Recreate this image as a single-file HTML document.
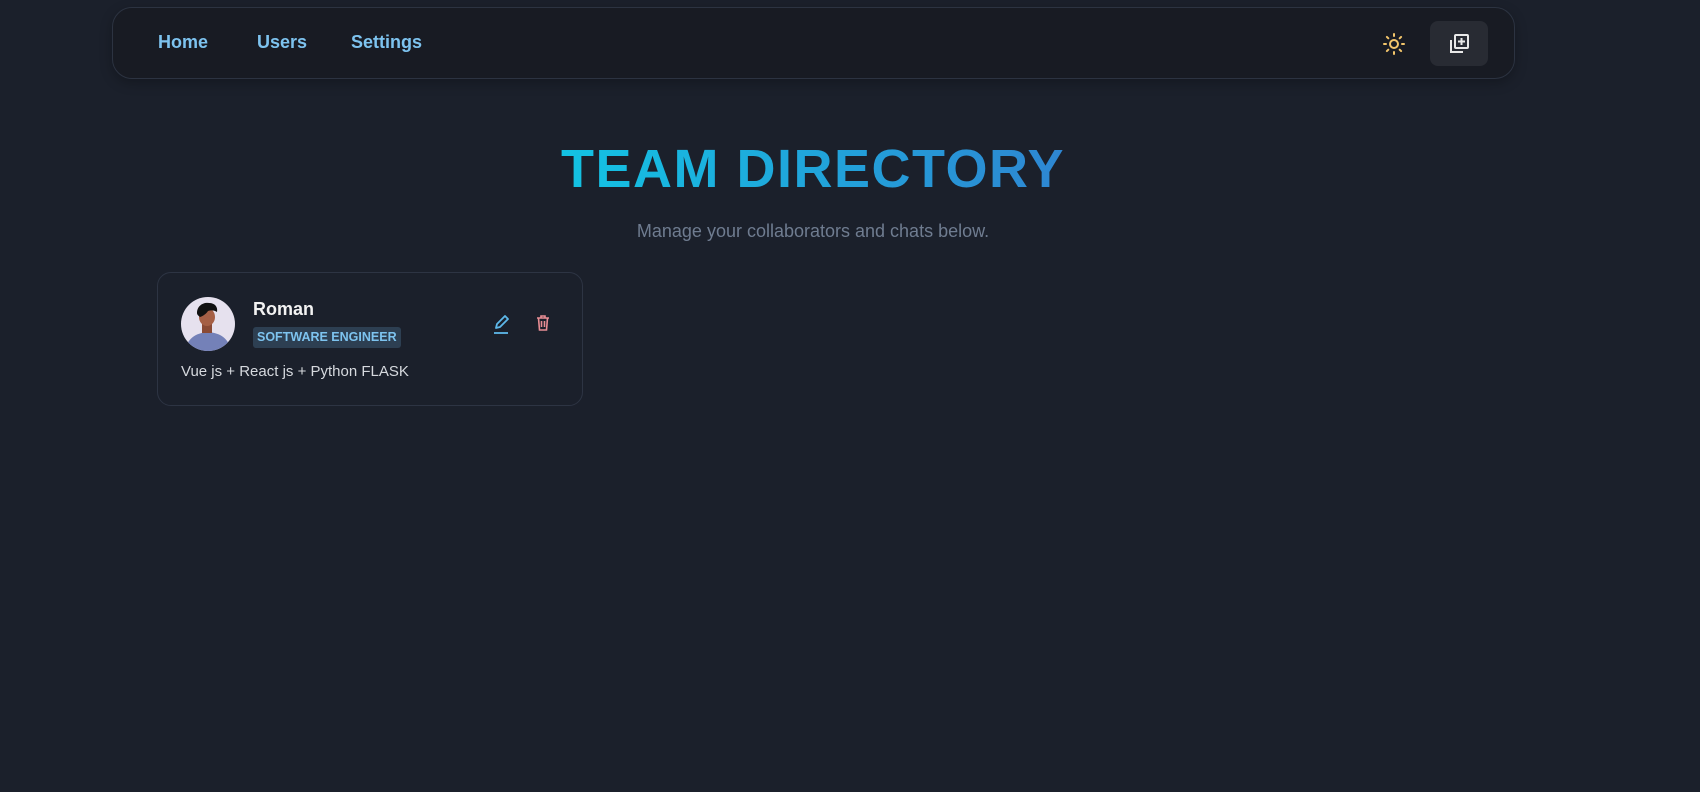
<!DOCTYPE html>
<html><head><meta charset="utf-8"><style>
*{box-sizing:border-box;margin:0;padding:0}
body{width:1700px;height:792px;background:#1b202b;font-family:"Liberation Sans",sans-serif;position:relative;overflow:hidden}
.nav{position:absolute;left:112px;top:7px;width:1403px;height:72px;background:#181b23;border:1px solid #2c3341;border-radius:20px;box-shadow:0 4px 12px rgba(0,0,0,.25)}
.nav a{position:absolute;top:24px;color:#7dc3ef;font-weight:bold;font-size:18px;text-decoration:none}
.btn{position:absolute;left:1317px;top:13px;width:58px;height:45px;background:#282b33;border-radius:8px}
h1{position:absolute;left:0;width:1626px;text-align:center;top:138px;font-size:54px;font-weight:bold;letter-spacing:1.5px;color:#1eb0e0}
h1 span{background:linear-gradient(90deg,#13c3e3,#2e86d2);-webkit-background-clip:text;background-clip:text;color:transparent}
.sub{position:absolute;left:0;width:1626px;text-align:center;top:221px;font-size:18px;color:#6f7c90}
.card{position:absolute;left:157px;top:272px;width:426px;height:134px;border:1px solid #2d3443;border-radius:14px;background:#1b202b}
.av{position:absolute;left:23px;top:24px;width:54px;height:54px;border-radius:50%;background:#e6e1ee;overflow:hidden}
.name{position:absolute;left:95px;top:26px;color:#f2f2f2;font-weight:bold;font-size:18px}
.badge{position:absolute;left:95px;top:54px;height:21px;padding:0 4px;background:#2d3f52;border-radius:3px;color:#7dc3ef;font-weight:bold;font-size:12.5px;line-height:21px}
.desc{position:absolute;left:23px;top:90px;color:#d6d9de;font-size:15px}
</style></head><body>
<div class="nav">
<a style="left:45px">Home</a><a style="left:144px">Users</a><a style="left:238px">Settings</a>
<svg style="position:absolute;left:1269px;top:24px" width="24" height="24" viewBox="0 0 24 24" fill="none" stroke="#f2c56b" stroke-width="2" stroke-linecap="round"><circle cx="12" cy="12" r="4"/><path d="M12 2v2M12 20v2M2 12h2M20 12h2M4.9 4.9l1.4 1.4M17.7 17.7l1.4 1.4M4.9 19.1l1.4-1.4M17.7 6.3l1.4-1.4"/></svg>
<div class="btn"><svg style="position:absolute;left:18px;top:12px" width="22" height="22" viewBox="0 0 22 22" fill="none" stroke="#e8e8e8" stroke-width="2"><rect x="7" y="2" width="13" height="13" rx="1"/><path d="M13.5 5v7M10 8.5h7M3 7v12h12"/></svg></div>
</div>
<h1><span>TEAM DIRECTORY</span></h1>
<div class="sub">Manage your collaborators and chats below.</div>
<div class="card">
<div class="av"><svg width="54" height="54" viewBox="0 0 54 54"><path d="M4 54c2-12 10-18 23-19 13 1 21 7 23 19z" fill="#7481b8"/><rect x="21" y="24" width="10" height="12" fill="#8a4a35"/><ellipse cx="26" cy="20" rx="8" ry="9" fill="#a55f45"/><path d="M16 16c0-7 6-11 12-10 6 0 9 4 8 9-3-2-6-2-9-1-2 3-5 5-8 6-1-1-3-2-3-4z" fill="#111"/></svg></div>
<div class="name">Roman</div>
<div class="badge">SOFTWARE ENGINEER</div>
<svg style="position:absolute;left:334px;top:40px" width="20" height="22" viewBox="0 0 20 22" fill="none" stroke="#5db8ea" stroke-width="1.8" stroke-linejoin="round"><path d="M4 15l1-4 8-8 3 3-8 8z"/><path d="M2 20h14"/></svg>
<svg style="position:absolute;left:378px;top:42px" width="14" height="16" viewBox="0 0 14 16" fill="none" stroke="#e88d94" stroke-width="1.6"><path d="M1 3h12M5 3V1h4v2M2.5 3l1 12h7l1-12M5.5 6v6M8.5 6v6"/></svg>
<div class="desc">Vue js + React js + Python FLASK</div>
</div>
</body></html>
